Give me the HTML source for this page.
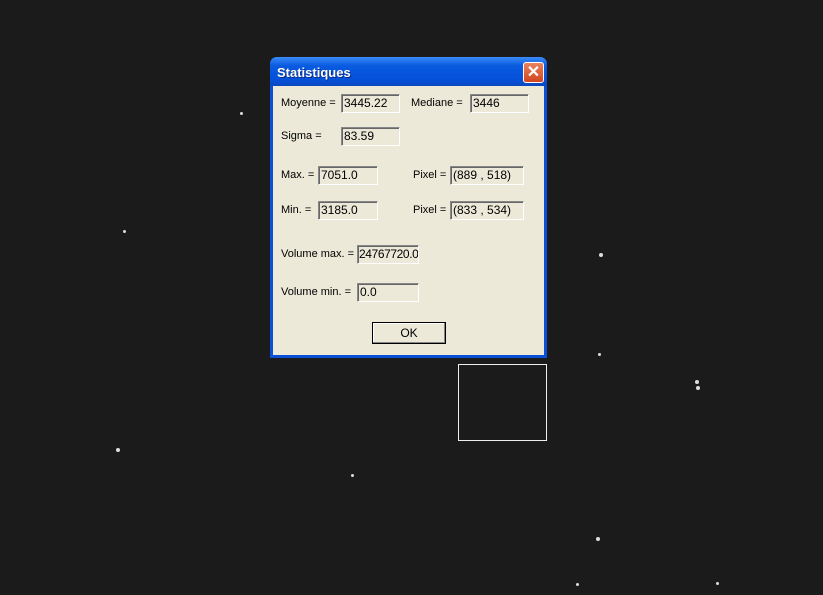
<!DOCTYPE html>
<html><head><style>
body{margin:0;width:823px;height:595px;background:#1b1b1b;position:relative;overflow:hidden;font-family:"Liberation Sans",sans-serif;}
.s{position:absolute;background:#ddd;border-radius:50%}
#dlg{position:absolute;left:270px;top:57px;width:277px;height:301px;background:#0a4fd8;border-radius:7px 7px 0 0;box-sizing:border-box}
#tb{position:absolute;left:0;top:0;width:277px;height:29px;border-radius:7px 7px 0 0;background:linear-gradient(#3a8cf7,#0a5be0 30%,#0550d8 80%,#0a48c0);}
#tb span{position:absolute;left:7px;top:8px;color:#fff;font-weight:bold;font-size:13px;text-shadow:1px 1px #0a2a80}
#x{position:absolute;right:3px;top:5px;width:21px;height:21px;border:1px solid #fff;border-radius:3px;background:linear-gradient(#e8835e,#d2451e);box-sizing:border-box;color:#fff;font-size:16px;line-height:19px;text-align:center;font-weight:bold}
#body{position:absolute;left:3px;top:29px;width:271px;height:269px;background:#ece9d8}
.l{position:absolute;font-size:11px;color:#000}
.f{position:absolute;height:19px;box-sizing:border-box;border:1px solid;border-color:#888 #fff #fff #888;box-shadow:inset 1px 1px #666;font-size:12px;line-height:17px;padding-left:2px;background:#ece9d8;white-space:nowrap;overflow:hidden}
#ok{position:absolute;left:99px;top:236px;width:74px;height:22px;box-sizing:border-box;border:1px solid #000;background:#ece9d8;box-shadow:inset -1px -1px #888,inset 1px 1px #fff;font-size:12px;text-align:center;line-height:20px}
</style></head><body>
<div class="s" style="left:599px;top:253px;width:4px;height:4px"></div>
<div class="s" style="left:116px;top:448px;width:4px;height:4px"></div>
<div class="s" style="left:695px;top:380px;width:4px;height:4px"></div>
<div class="s" style="left:696px;top:386px;width:4px;height:4px"></div>
<div class="s" style="left:596px;top:537px;width:4px;height:4px"></div>
<div class="s" style="left:123px;top:230px;width:3px;height:3px"></div>
<div class="s" style="left:351px;top:474px;width:3px;height:3px"></div>
<div class="s" style="left:598px;top:353px;width:3px;height:3px"></div>
<div class="s" style="left:576px;top:583px;width:3px;height:3px"></div>
<div class="s" style="left:716px;top:582px;width:3px;height:3px"></div>
<div class="s" style="left:240px;top:112px;width:3px;height:3px"></div>
<div style="position:absolute;left:458px;top:364px;width:89px;height:77px;border:1px solid #eee;box-sizing:border-box"></div>
<div id="dlg"><div id="tb"><span>Statistiques</span><div id="x">✕</div></div>
<div id="body">
<div class="l" style="left:8px;top:11px">Moyenne =</div><div class="f" style="left:68px;top:8px;width:59px">3445.22</div>
<div class="l" style="left:138px;top:11px">Mediane =</div><div class="f" style="left:197px;top:8px;width:59px">3446</div>
<div class="l" style="left:8px;top:44px">Sigma =</div><div class="f" style="left:68px;top:41px;width:59px">83.59</div>
<div class="l" style="left:8px;top:83px">Max. =</div><div class="f" style="left:45px;top:80px;width:60px">7051.0</div>
<div class="l" style="left:140px;top:83px">Pixel =</div><div class="f" style="left:177px;top:80px;width:74px">(889 , 518)</div>
<div class="l" style="left:8px;top:118px">Min. =</div><div class="f" style="left:45px;top:115px;width:60px">3185.0</div>
<div class="l" style="left:140px;top:118px">Pixel =</div><div class="f" style="left:177px;top:115px;width:74px">(833 , 534)</div>
<div class="l" style="left:8px;top:162px">Volume max. =</div><div class="f" style="left:84px;top:159px;width:62px;padding-left:1px;letter-spacing:-0.4px">24767720.0</div>
<div class="l" style="left:8px;top:200px">Volume min. =</div><div class="f" style="left:84px;top:197px;width:62px">0.0</div>
<div id="ok">OK</div>
</div></div>
</body></html>
